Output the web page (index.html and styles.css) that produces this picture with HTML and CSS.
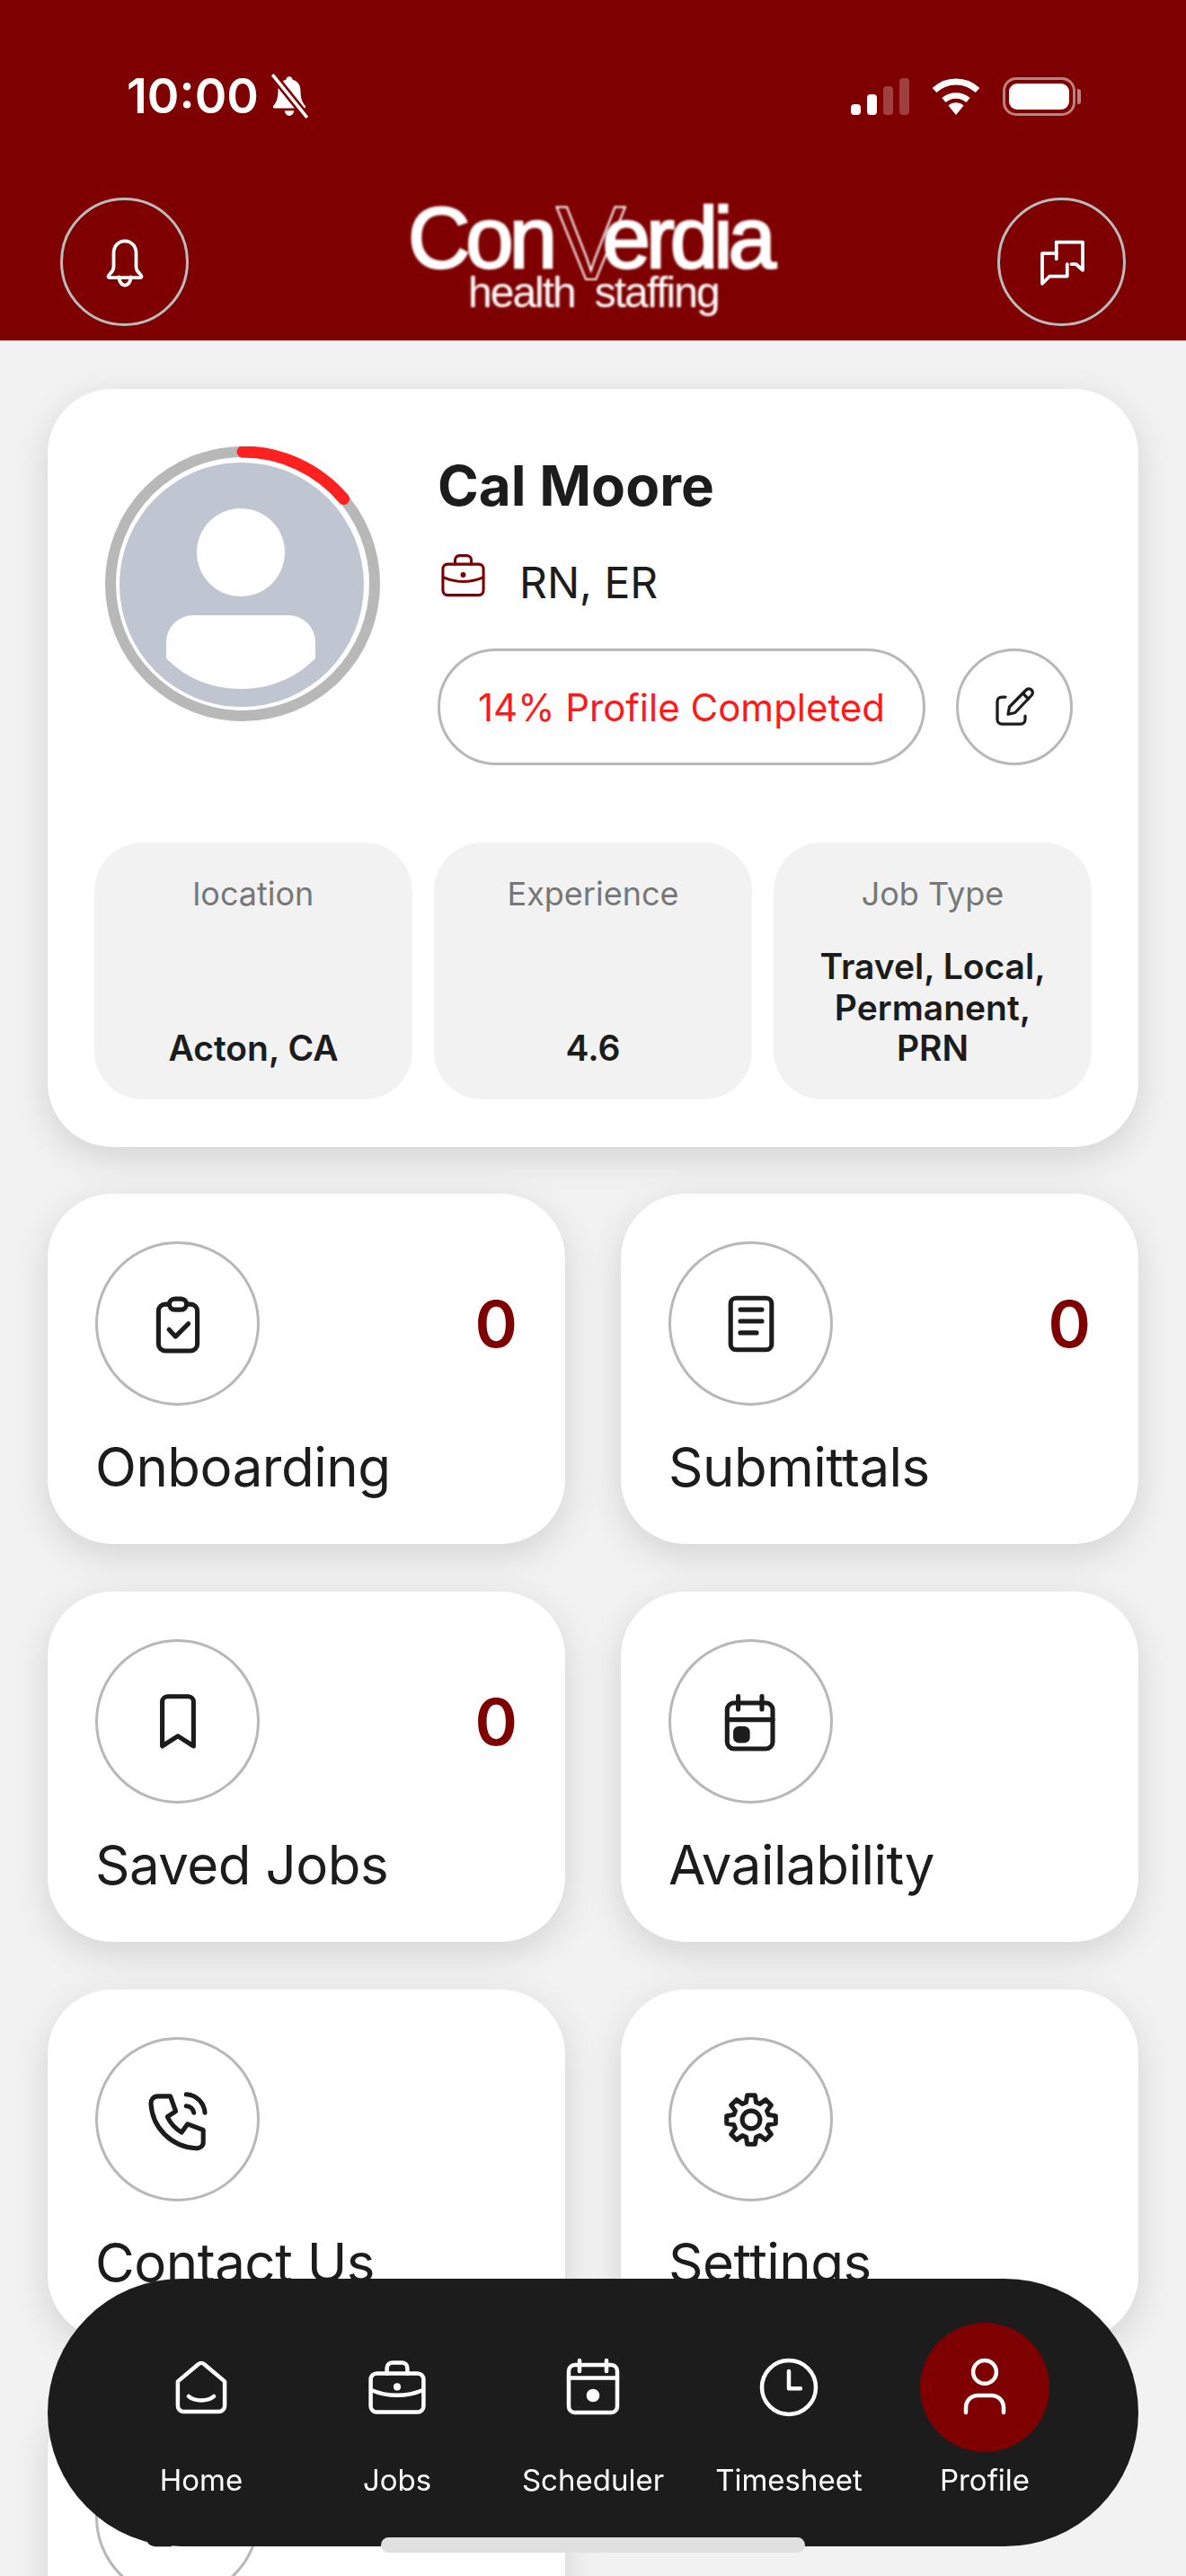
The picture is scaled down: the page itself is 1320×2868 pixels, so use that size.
FILE: index.html
```html
<!DOCTYPE html>
<html lang="en">
<head>
    <meta charset="UTF-8">
    <meta name="viewport" content="width=device-width, initial-scale=1.0">
    <title>ConVerdia Profile</title>
    <link rel="stylesheet" href="styles.css">
</head>
<body>
    <header class="app-header">
        <div class="status-bar">
            <div class="status-left">
                <span class="clock">10:00</span>
                <svg class="mute-icon" viewBox="0 0 24 24" width="50" height="54">
                    <path d="M12 1.5c-1 0-1.6.8-1.8 1.7C7.400 4 6 6.300 6 9.200c0 4-1 6.300-2.500 8-.5.6-.1 1.300.6 1.300h15.800c.7 0 1.100-.7.600-1.300-1.500-1.700-2.500-4-2.500-8 0-2.900-1.400-5.200-4.200-6-.2-.9-.8-1.700-1.800-1.700zM9.500 19.800h5c-.2 1.500-1.200 2.700-2.500 2.700s-2.300-1.200-2.500-2.700z" fill="#fff"/>
                    <path d="M3 .5l18.500 23" stroke="#7f0000" stroke-width="4.200"/>
                    <path d="M3 .5l18.500 23" stroke="#fff" stroke-width="1.700"/>
                </svg>
            </div>
            <div class="status-right">
                <div class="signal">
                    <span class="bar-1"></span>
                    <span class="bar-2"></span>
                    <span class="bar-3 faint"></span>
                    <span class="bar-4 faint"></span>
                </div>
                <svg viewBox="0 0 56 41" width="56" height="41">
                    <path d="M28 41l-8.500-10.500a13 13 0 0 1 17 0z" fill="#fff"/>
                    <path d="M14.500 24.500a20.500 20.500 0 0 1 27 0" fill="none" stroke="#fff" stroke-width="6.500"/>
                    <path d="M4 13.500a35 35 0 0 1 48 0" fill="none" stroke="#fff" stroke-width="7"/>
                </svg>
                <div class="battery">
                    <div class="battery-fill"></div>
                </div>
            </div>
        </div>
        <div class="toolbar">
            <button class="round-btn">
                <svg class="icon-line" viewBox="0 0 24 24" width="60" height="60">
                    <path d="M12 2.500c-3 0-5 2.500-5 5.500v6c0 1.300-.6 2.200-1.500 3-.5.500-.9.900-.9 1.300 0 .3.300.5.700.5h13.400c.4 0 .7-.2.700-.5 0-.4-.4-.8-.9-1.300-.9-.8-1.500-1.700-1.500-3V8c0-3-2-5.500-5-5.500z"/>
                    <path d="M9.400 18.500c0 2.200 1.100 3.700 2.600 3.700s2.600-1.500 2.600-3.700"/>
                </svg>
            </button>
            <div class="logo">
                <div class="logo-name"><span>Con</span><span class="logo-v">V</span><span>erdia</span></div>
                <div class="logo-sub"><span>health</span><span>staffing</span></div>
            </div>
            <button class="round-btn">
                <svg class="icon-line" viewBox="0 0 24 24" width="60" height="60">
                    <path d="M9.500 3h11.700v12.500l-3-2.700h-2"/>
                    <path d="M9.500 3v7.500"/>
                    <path d="M9.500 8H3.200v13.500l3.300-3.300h7.800v-5.400"/>
                </svg>
            </button>
        </div>
    </header>

    <main class="content">
        <section class="profile-card">
            <div class="profile-top">
                <svg class="avatar" viewBox="0 0 306 306" width="306" height="306">
                    <circle cx="153" cy="153" r="147" fill="none" stroke="#b8b8b8" stroke-width="12"/>
                    <path d="M153 6A147 147 0 0 1 265.600 58.500" fill="none" stroke="#ff2020" stroke-width="13" stroke-linecap="round"/>
                    <circle cx="152" cy="154" r="136" fill="#bfc6d2"/>
                    <circle cx="151" cy="118" r="49" fill="#fff"/>
                    <path d="M68 236V218a30 30 0 0 1 30-30h106a30 30 0 0 1 30 30v18c-22 22-50 34-83 34s-61-12-83-34z" fill="#fff"/>
                </svg>
                <div class="profile-info">
                    <h1 class="profile-name">Cal Moore</h1>
                    <div class="profile-role">
                        <svg class="icon-brand" viewBox="0 0 24 24" width="57" height="57">
                            <rect x="2.500" y="6.800" width="19" height="14.500" rx="2.200"/>
                            <path d="M8.200 6.800V4.900c0-1.200.9-2.100 2.100-2.100h3.400c1.200 0 2.100.9 2.100 2.100v1.900"/>
                            <path d="M2.700 13c5.800 2.600 12.800 2.600 18.600 0"/>
                            <circle class="dot" cx="12" cy="11.800" r=".6"/>
                        </svg>
                        <span>RN, ER</span>
                    </div>
                    <div class="profile-actions">
                        <div class="progress-pill">14% Profile Completed</div>
                        <button class="edit-btn">
                            <svg class="icon-dark thin" viewBox="0 0 24 24" width="60" height="60">
                                <path d="M8 7.600H6.400a2 2 0 0 0-2 2v8a2 2 0 0 0 2 2h8.400a2 2 0 0 0 2-2V16"/>
                                <path d="M9.200 15.300l.6-3.300 7.500-7.600a1.700 1.700 0 0 1 2.400 2.400l-7.400 7.800z"/>
                                <path d="M15.800 6l2.400 2.400"/>
                            </svg>
                        </button>
                    </div>
                </div>
            </div>
            <div class="stats">
                <div class="stat">
                    <div class="stat-label">location</div>
                    <div class="stat-value">Acton, CA</div>
                </div>
                <div class="stat">
                    <div class="stat-label">Experience</div>
                    <div class="stat-value">4.6</div>
                </div>
                <div class="stat">
                    <div class="stat-label">Job Type</div>
                    <div class="stat-value">Travel, Local, Permanent, PRN</div>
                </div>
            </div>
        </section>

        <section class="tiles">
            <div class="tile">
                <div class="tile-top">
                    <div class="tile-icon">
                        <svg class="icon-dark" viewBox="0 0 24 24" width="72" height="72">
                            <rect x="4.800" y="4.700" width="14.400" height="17.300" rx="2.500"/>
                            <rect class="knockout" x="8.800" y="2.700" width="6.400" height="4" rx="2"/>
                            <path d="M8.700 14.100l2.400 2.600 4.800-4.800"/>
                        </svg>
                    </div>
                    <span class="tile-count">0</span>
                </div>
                <div class="tile-label">Onboarding</div>
            </div>
            <div class="tile">
                <div class="tile-top">
                    <div class="tile-icon">
                        <svg class="icon-dark" viewBox="0 0 24 24" width="72" height="72">
                            <rect x="4.400" y="2.400" width="15.200" height="19.200" rx="2"/>
                            <path d="M8 6.700h8M8 11h8M8 15.300h6"/>
                        </svg>
                    </div>
                    <span class="tile-count">0</span>
                </div>
                <div class="tile-label">Submittals</div>
            </div>
            <div class="tile">
                <div class="tile-top">
                    <div class="tile-icon">
                        <svg class="icon-dark" viewBox="0 0 24 24" width="72" height="72">
                            <path d="M6.200 21V4.600a2 2 0 0 1 2-2h7.600a2 2 0 0 1 2 2V21L12 17.300z"/>
                        </svg>
                    </div>
                    <span class="tile-count">0</span>
                </div>
                <div class="tile-label">Saved Jobs</div>
            </div>
            <div class="tile">
                <div class="tile-top">
                    <div class="tile-icon">
                        <svg class="icon-dark" viewBox="0 0 24 24" width="72" height="72">
                            <rect x="3.100" y="5" width="16.900" height="17" rx="2.500"/>
                            <path d="M3.100 11.200H20M7.200 2.500v4.800M16 2.500v4.800"/>
                            <rect class="solid" x="6.200" y="14.500" width="4.500" height="4.500" rx="1.200"/>
                        </svg>
                    </div>
                </div>
                <div class="tile-label">Availability</div>
            </div>
            <div class="tile">
                <div class="tile-top">
                    <div class="tile-icon">
                        <svg class="icon-dark" viewBox="0 0 24 24" width="72" height="72">
                            <path d="M4.500 3.300h4.700l2 5.600-3.100 2c1.200 2.600 2.800 4.300 5.300 5.800l2.200-3.100 5.800 2.200v4.700c0 1.300-1.400 2.200-2.700 2.100C9.500 22 2.500 15 2 6c0-1.500 1-2.700 2.500-2.700z"/>
                            <path d="M15.100 2.600A7.200 7.200 0 0 1 22 9.400M15.100 6.900a3 3 0 0 1 2.800 2.500"/>
                        </svg>
                    </div>
                </div>
                <div class="tile-label">Contact Us</div>
            </div>
            <div class="tile">
                <div class="tile-top">
                    <div class="tile-icon">
                        <svg class="icon-dark" viewBox="0 0 24 24" width="72" height="72">
                            <path d="M10.560 2.910h2.880l.41 2.650 1.400.58 2.160-1.580 2.030 2.030-1.580 2.160.58 1.400 2.650.41v2.880l-2.650.41-.58 1.400 1.580 2.160-2.030 2.030-2.160-1.580-1.400.58-.41 2.650h-2.880l-.41-2.650-1.400-.58-2.160 1.580-2.030-2.030 1.580-2.160-.58-1.400-2.650-.41v-2.880l2.650-.41.58-1.400-1.580-2.160 2.030-2.030 2.160 1.580 1.400-.58z"/>
                            <circle cx="12" cy="12" r="3.300"/>
                        </svg>
                    </div>
                </div>
                <div class="tile-label">Settings</div>
            </div>
            <div class="tile">
                <div class="tile-top">
                    <div class="tile-icon">
                        <svg class="icon-dark" viewBox="0 0 24 24" width="72" height="72">
                            <path d="M9 21.900H3.500A2.500 2.500 0 0 1 1 19.400v-16A2.500 2.500 0 0 1 3.500 1H9M16 17l6-5-6-5M22 12H8"/>
                        </svg>
                    </div>
                </div>
            </div>
        </section>
    </main>

    <nav class="bottom-nav">
        <div class="nav-item">
            <div class="nav-icon">
                <svg class="icon-line" viewBox="0 0 24 24" width="72" height="72">
                    <path d="M3.300 9.800l7.600-6.400a1.600 1.600 0 0 1 2.200 0l7.600 6.400v9a2.200 2.200 0 0 1-2.200 2.200h-13a2.200 2.200 0 0 1-2.200-2.200z"/>
                    <path d="M7.300 15.300c2.200 2 7.200 2 9.400 0"/>
                </svg>
            </div>
            <span>Home</span>
        </div>
        <div class="nav-item">
            <div class="nav-icon">
                <svg class="icon-line" viewBox="0 0 24 24" width="72" height="72">
                    <rect x="2.200" y="6.800" width="19.600" height="14.400" rx="2.200"/>
                    <path d="M8.200 6.800V4.900c0-1.200.9-2.100 2.100-2.100h3.400c1.200 0 2.100.9 2.100 2.100v1.900"/>
                    <path d="M2.400 13c6 2.600 13.200 2.600 19.200 0"/>
                    <circle class="dot" cx="12" cy="11.800" r=".6"/>
                </svg>
            </div>
            <span>Jobs</span>
        </div>
        <div class="nav-item">
            <div class="nav-icon">
                <svg class="icon-line" viewBox="0 0 24 24" width="72" height="72">
                    <rect x="3" y="3.700" width="18" height="17.600" rx="2.200"/>
                    <path d="M3 8.500h18M7 2v4M17 2v4"/>
                    <circle class="dot" cx="12" cy="15" r="1.700"/>
                </svg>
            </div>
            <span>Scheduler</span>
        </div>
        <div class="nav-item">
            <div class="nav-icon">
                <svg class="icon-line" viewBox="0 0 24 24" width="72" height="72">
                    <circle cx="12" cy="12" r="10"/>
                    <path d="M12 6v6.400h4.300"/>
                </svg>
            </div>
            <span>Timesheet</span>
        </div>
        <div class="nav-item active">
            <div class="nav-icon">
                <svg class="icon-line" viewBox="0 0 24 24" width="72" height="72">
                    <circle cx="12" cy="6.300" r="4.300"/>
                    <path d="M5 21.300v-1.800a4.500 4.500 0 0 1 4.500-4.500h5a4.500 4.500 0 0 1 4.500 4.500v1.800"/>
                </svg>
            </div>
            <span>Profile</span>
        </div>
    </nav>
    <div class="home-indicator"></div>
</body>
</html>
```

FILE: styles.css
```css
html, body {
    margin: 0;
    height: 2868px;
    overflow: hidden;
}
body {
    font-family: Inter, "Noto Sans", sans-serif;
    background-color: #f2f2f2;
    color: #1c1c1c;
}
button {
    padding: 0;
    background: none;
    cursor: pointer;
}

/* line icons */
svg {
    display: block;
    flex-shrink: 0;
}
.icon-line, .icon-dark, .icon-brand {
    fill: none;
    stroke-width: 1.5;
    stroke-linecap: round;
    stroke-linejoin: round;
}
.icon-line {
    stroke: #fff;
}
.icon-dark {
    stroke: #1c1c1c;
    stroke-width: 1.7;
}
.icon-dark.thin {
    stroke-width: 1.3;
}
.icon-brand {
    stroke: #7f0000;
    stroke-width: 1.3;
}
.icon-line .dot {
    fill: #fff;
}
.icon-brand .dot {
    fill: #7f0000;
}
.icon-dark .solid {
    fill: #1c1c1c;
}
.icon-dark .knockout {
    fill: #fff;
}

/* header */
.app-header {
    height: 379px;
    box-sizing: border-box;
    padding-top: 85px;
    background-color: #7f0000;
}
.status-bar {
    display: flex;
    justify-content: space-between;
    align-items: center;
    height: 44px;
    padding: 0 123px 0 141px;
}
.status-left {
    display: flex;
    align-items: center;
    gap: 9px;
}
.clock {
    color: #fff;
    font-size: 54px;
    font-weight: 600;
    line-height: 44px;
}
.status-right {
    display: flex;
    align-items: center;
    gap: 24px;
}
.signal {
    display: flex;
    align-items: flex-end;
    gap: 7px;
    height: 41px;
}
.signal span {
    width: 11px;
    border-radius: 4px;
    background-color: #fff;
}
.signal .faint {
    background-color: rgba(255, 255, 255, 0.25);
}
.bar-1 { height: 12px; }
.bar-2 { height: 23px; }
.bar-3 { height: 32px; }
.bar-4 { height: 41px; }
.battery {
    position: relative;
    width: 81px;
    height: 43px;
    box-sizing: border-box;
    padding: 4px;
    border: 3px solid rgba(255, 255, 255, 0.5);
    border-radius: 15px;
}
.battery::after {
    content: "";
    position: absolute;
    top: 10px;
    right: -9px;
    width: 4px;
    height: 17px;
    border-radius: 0 3px 3px 0;
    background: rgba(255, 255, 255, 0.5);
}
.battery-fill {
    height: 100%;
    border-radius: 9px;
    background-color: #fff;
}
.toolbar {
    display: flex;
    justify-content: space-between;
    align-items: center;
    margin-top: 91px;
    padding: 0 67px;
}
.round-btn {
    display: flex;
    justify-content: center;
    align-items: center;
    width: 143px;
    height: 143px;
    border: 3px solid #b9bcbc;
    border-radius: 50%;
}
.logo {
    width: 404px;
    height: 120px;
    margin: 0 0 17px -8px;
    color: #fff;
    font-family: "Liberation Sans", Arial, sans-serif;
    filter: blur(1.2px);
}
.logo-name {
    display: flex;
    align-items: flex-start;
    font-size: 96px;
    line-height: 84px;
    letter-spacing: -5px;
    -webkit-text-stroke: 2.5px #fff;
}
.logo-v {
    margin: 0 -26px 0 4px;
    color: transparent;
    font-size: 116px;
    line-height: 96px;
    letter-spacing: 0;
    -webkit-text-stroke: 2px #fff;
}
.logo-sub {
    display: flex;
    gap: 22px;
    margin: -15px 0 0 67px;
    font-size: 48px;
    line-height: 44px;
    letter-spacing: -2px;
}

/* main column */
.content {
    display: flex;
    flex-direction: column;
    gap: 52px;
    padding: 54px 53px 0;
}
.profile-card {
    padding: 64px 52px 53px;
    border-radius: 72px;
    background-color: #fff;
    box-shadow: 0 12px 40px rgba(0, 0, 0, 0.13);
}
.profile-top {
    display: flex;
    gap: 64px;
    padding: 0 12px;
}
.profile-info {
    padding-top: 8px;
}
.profile-name {
    margin: 0;
    font-size: 62px;
    font-weight: 700;
    line-height: 72px;
}
.profile-role {
    display: flex;
    align-items: center;
    gap: 34px;
    height: 58px;
    margin-top: 42px;
    font-size: 48px;
}
.profile-role svg {
    margin-bottom: 16px;
}
.profile-actions {
    display: flex;
    align-items: center;
    gap: 34px;
    margin-top: 45px;
}
.progress-pill {
    display: flex;
    justify-content: center;
    align-items: center;
    width: 543px;
    height: 130px;
    box-sizing: border-box;
    border: 3px solid #b8b8b8;
    border-radius: 65px;
    color: #ff1a1a;
    font-size: 42px;
}
.edit-btn {
    display: flex;
    justify-content: center;
    align-items: center;
    width: 130px;
    height: 130px;
    border: 3px solid #b8b8b8;
    border-radius: 50%;
}
.stats {
    display: grid;
    grid-template-columns: repeat(3, 1fr);
    gap: 24px;
    margin-top: 86px;
}
.stat {
    display: flex;
    flex-direction: column;
    justify-content: space-between;
    height: 286px;
    box-sizing: border-box;
    padding: 35px 40px 34px;
    border-radius: 54px;
    background-color: #f2f2f2;
    text-align: center;
}
.stat-label {
    color: #777;
    font-size: 36px;
    line-height: 44px;
}
.stat-value {
    font-size: 39px;
    font-weight: 600;
    line-height: 45.600px;
}

/* tile grid */
.tiles {
    display: grid;
    grid-template-columns: repeat(2, 576px);
    column-gap: 62px;
    row-gap: 53px;
}
.tile {
    height: 390px;
    box-sizing: border-box;
    padding: 53px;
    border-radius: 72px;
    background-color: #fff;
    box-shadow: 0 12px 40px rgba(0, 0, 0, 0.13);
}
.tile-top {
    display: flex;
    justify-content: space-between;
    align-items: center;
}
.tile-icon {
    display: flex;
    justify-content: center;
    align-items: center;
    width: 183px;
    height: 183px;
    box-sizing: border-box;
    border: 3px solid #b8b8b8;
    border-radius: 50%;
}
.tile-count {
    color: #7f0000;
    font-size: 72px;
    font-weight: 600;
    line-height: 1;
}
.tile-label {
    margin-top: 32px;
    font-size: 60px;
    line-height: 72px;
    letter-spacing: -0.5px;
}

/* floating tab bar */
.bottom-nav {
    position: fixed;
    left: 53px;
    top: 2537px;
    display: grid;
    grid-template-columns: repeat(5, 1fr);
    width: 1214px;
    height: 298px;
    box-sizing: border-box;
    padding: 49px 62px 0;
    border-radius: 149px;
    background-color: #1c1c1c;
    color: #fff;
}
.nav-item {
    display: flex;
    flex-direction: column;
    align-items: center;
    font-size: 33px;
    line-height: 40px;
}
.nav-icon {
    display: flex;
    justify-content: center;
    align-items: center;
    width: 144px;
    height: 144px;
    margin-bottom: 11px;
    border-radius: 50%;
}
.nav-item.active .nav-icon {
    background-color: #7f0000;
}
.home-indicator {
    position: fixed;
    left: 424px;
    top: 2825px;
    width: 472px;
    height: 17px;
    border-radius: 9px;
    background-color: #e0e0e0;
}
```
